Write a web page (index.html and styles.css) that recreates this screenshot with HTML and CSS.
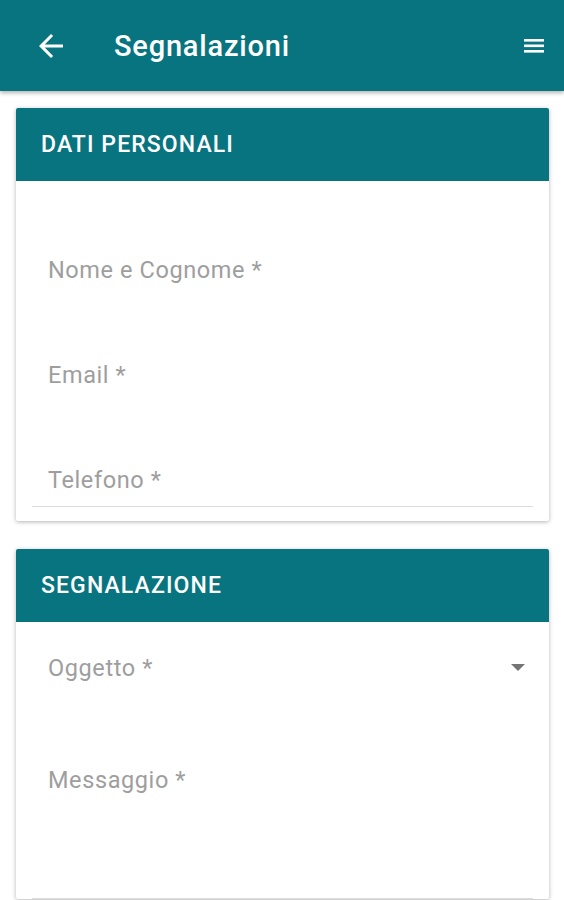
FILE: index.html
```html
<!DOCTYPE html>
<html>
<head>
    <title>Segnalazioni</title>
    <link rel="stylesheet" href="styles.css">
</head>
<body>

    <div class="toolbar">
        <svg class="back" width="36" height="36" viewBox="0 0 24 24"><path fill="#fff" d="M20 11H7.83l5.59-5.59L12 4l-8 8 8 8 1.41-1.41L7.83 13H20v-2z"/></svg>
        <div class="title">Segnalazioni</div>
        <svg class="menu" width="20" height="16" viewBox="0 0 20 16"><rect x="0" y="1" width="20" height="2.6" fill="#fff"/><rect x="0" y="6.5" width="20" height="2.6" fill="#fff"/><rect x="0" y="12" width="20" height="2.6" fill="#fff"/></svg>
    </div>

    <div class="content">
        <div class="card">
            <div class="card-head">DATI PERSONALI</div>
            <div class="card-body personal">
                <div class="field">Nome e Cognome *</div>
                <div class="field">Email *</div>
                <div class="field last">Telefono *</div>
            </div>
        </div>

        <div class="card">
            <div class="card-head">SEGNALAZIONE</div>
            <div class="card-body report">
                <div class="field select">
                    <span>Oggetto *</span>
                    <svg width="14" height="8" viewBox="0 0 14 8"><path d="M0 0h14L7 7z" fill="#757575"/></svg>
                </div>
                <div class="field message">Messaggio *</div>
            </div>
        </div>
    </div>

</body>
</html>
```

FILE: styles.css
```css
body {
    margin: 0;
    font-family: Roboto, "Noto Sans", Arial, sans-serif;
    background: #fff;
}
.toolbar {
    height: 91px;
    background-color: #08747f;
    display: flex;
    align-items: center;
    padding: 0 20px 0 33px;
    box-shadow: 0 2px 4px rgba(0,0,0,0.3);
    color: #fff;
}
.back {
    margin-right: 45px;
}
.title {
    flex: 1;
    font-size: 29px;
    font-weight: 500;
    letter-spacing: 0.8px;
}
.content {
    padding: 17px 15px 0 16px;
}
.card {
    background: #fff;
    border-radius: 2px;
    box-shadow: 0 1px 4px rgba(0,0,0,0.3);
    margin-bottom: 28px;
}
.card-head {
    height: 73px;
    background-color: #08747f;
    color: #fff;
    font-size: 23px;
    font-weight: 500;
    letter-spacing: 1.1px;
    display: flex;
    align-items: center;
    padding-left: 25px;
    border-radius: 2px 2px 0 0;
}
.card-body {
    padding: 0 16px;
}
.personal {
    padding-top: 73px;
    padding-bottom: 14px;
}
.report {
    padding-top: 30px;
}
.field {
    font-size: 23.5px;
    letter-spacing: 0.6px;
    color: #9e9e9e;
    height: 32px;
    line-height: 32px;
    padding-left: 16px;
    margin-bottom: 73px;
}
.field.last {
    margin-bottom: 0;
    padding-bottom: 10px;
    border-bottom: 1px solid #dcdcdc;
}
.select {
    display: flex;
    justify-content: space-between;
    align-items: center;
    padding-right: 8px;
    margin-bottom: 80px;
}
.message {
    height: 134px;
    line-height: 32px;
    border-bottom: 1px solid #dcdcdc;
    margin-bottom: 0;
}
```
